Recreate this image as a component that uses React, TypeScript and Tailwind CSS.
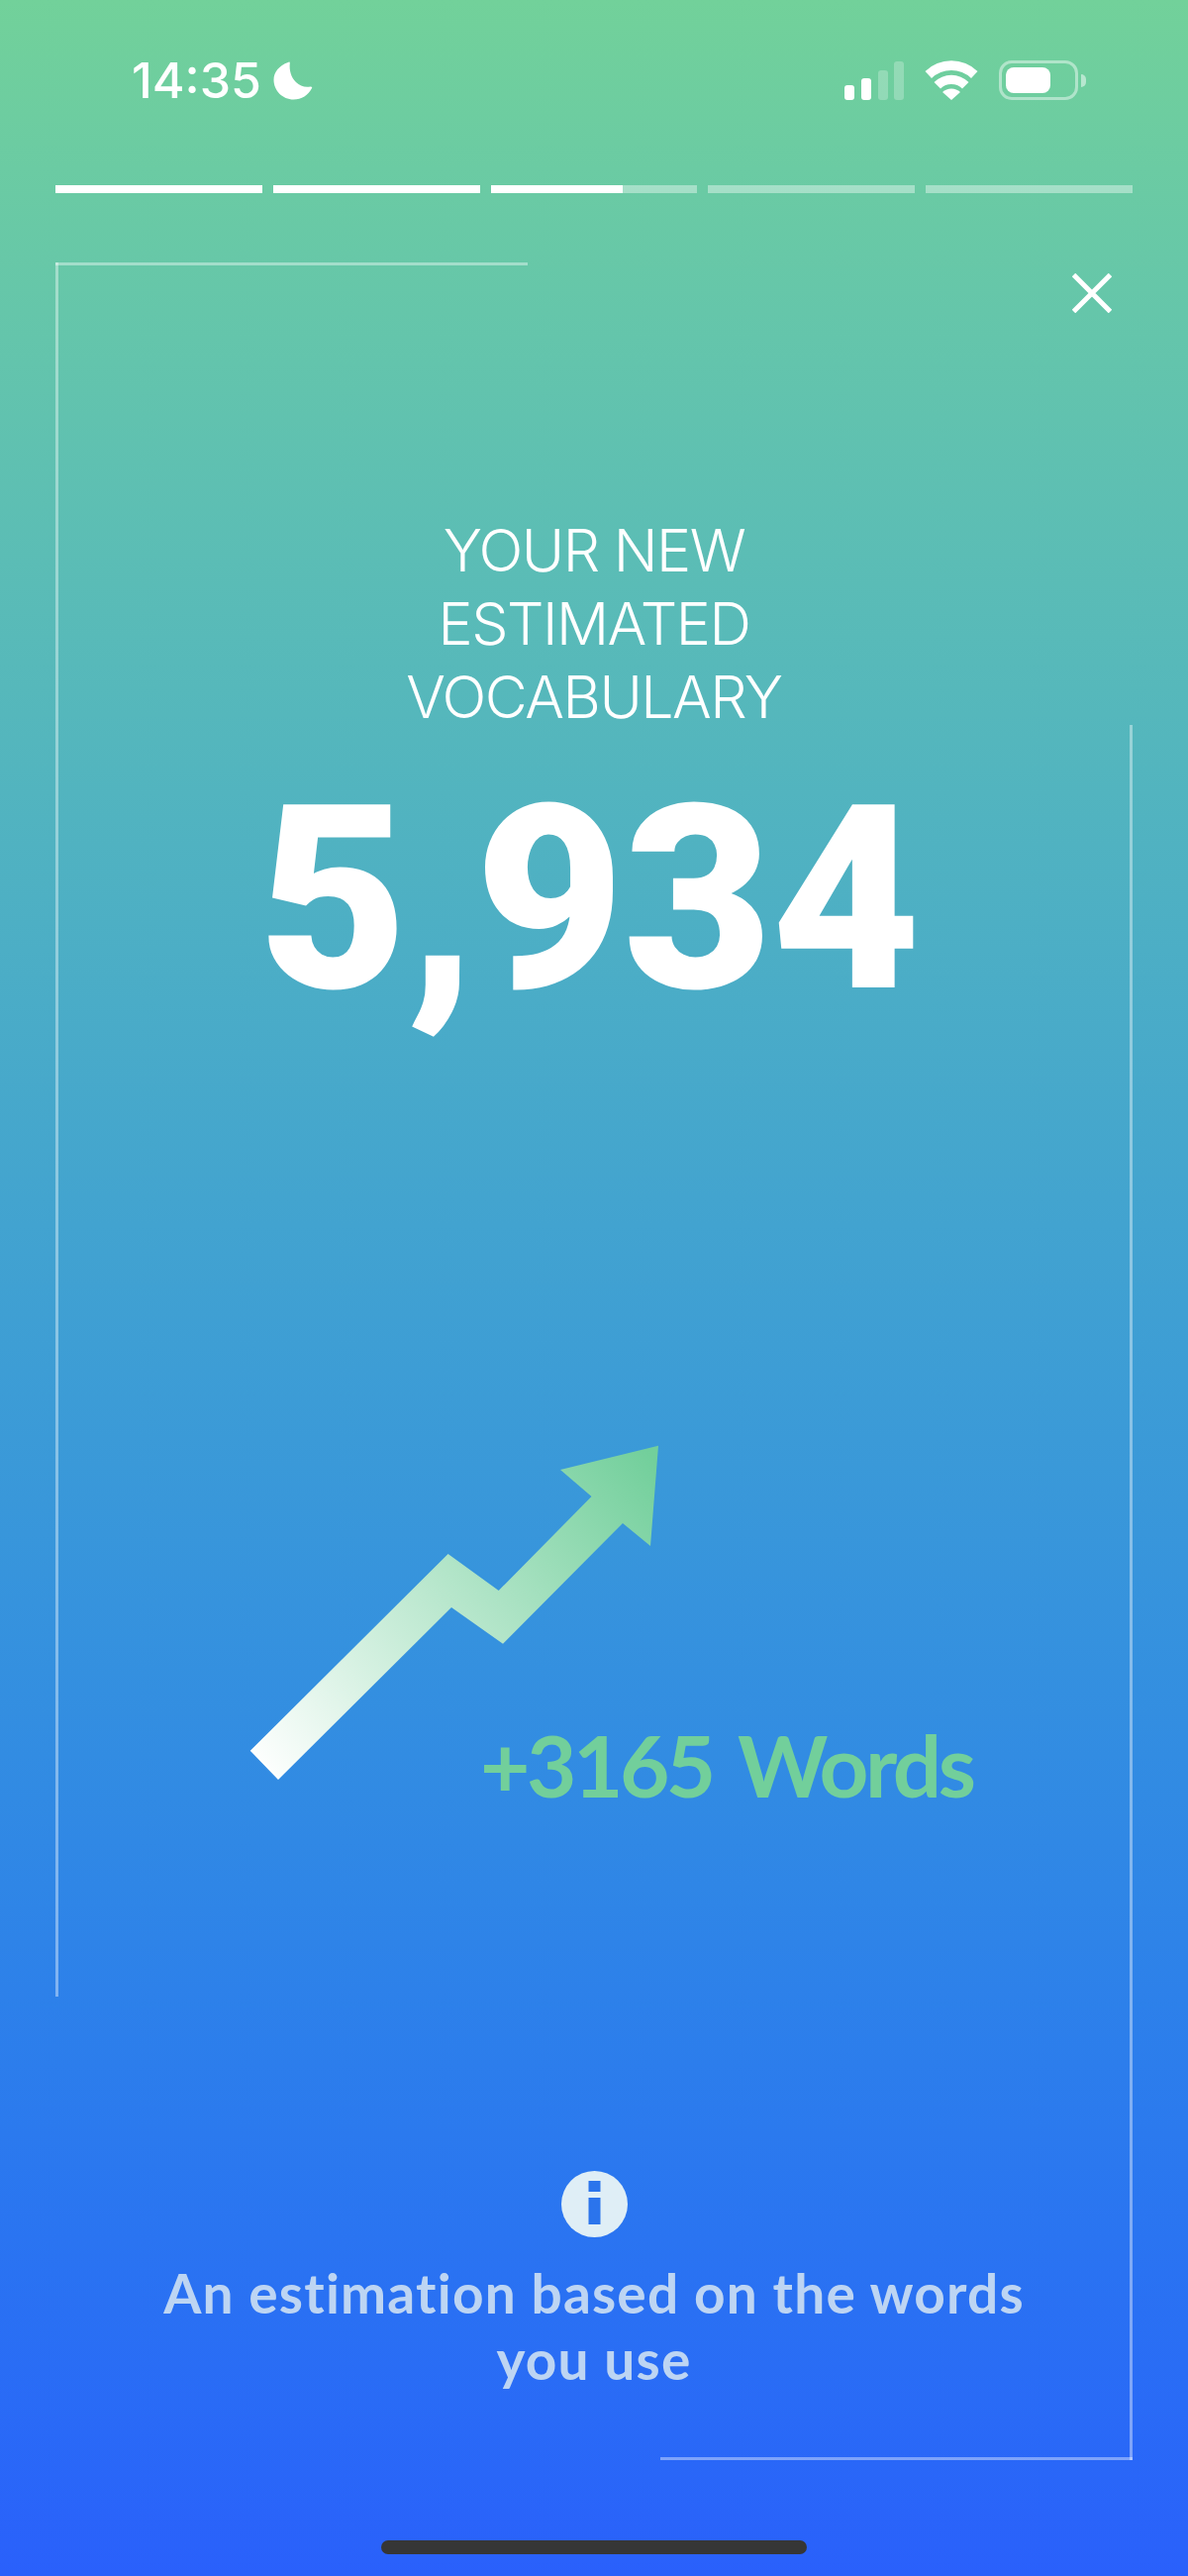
const Moon = () => (
  <svg width="40" height="39" viewBox="0 0 40 39" fill="#ffffff">
    <path d="M15 1 C16 0 17 0.5 16.8 2 C16 9 18 16 23 21 C27 25 32 26.5 37.5 25.5 C39 25.3 39.6 26.2 39 27 C35.5 34 28.5 38.5 20.5 38.5 C9.5 38.5 0.5 29.5 0.5 18.5 C0.5 11 6 4 15 1 Z" />
  </svg>
)

const Signal = () => (
  <svg width="60" height="39" viewBox="0 0 60 39" fill="#ffffff">
    <rect x="0" y="24" width="10" height="15" rx="3" />
    <rect x="17" y="17" width="10" height="22" rx="3" />
    <rect x="34" y="9" width="10" height="30" rx="3" fillOpacity="0.25" />
    <rect x="50" y="0" width="10" height="39" rx="3" fillOpacity="0.25" />
  </svg>
)

const Wifi = () => (
  <svg width="54" height="40" viewBox="0 0 54 40" fill="#ffffff">
    <path d="M0.5 11 A38 38 0 0 1 53.5 11 L47 18 A29 29 0 0 0 7 18 Z" />
    <path d="M9.5 22 A25 25 0 0 1 44.5 22 L38 28.5 A16 16 0 0 0 16 28.5 Z" />
    <path d="M18 32 A13 13 0 0 1 36 32 L27 40 Z" />
  </svg>
)

const Battery = () => (
  <div className="flex items-center">
    <div className="w-[80px] h-[40px] rounded-[13px] border-[3px] border-white/45 p-[4px]">
      <div className="w-[45px] h-full rounded-[8px] bg-white" />
    </div>
    <div className="ml-[3px] w-[5px] h-[13px] rounded-r-full bg-white/50" />
  </div>
)

const Close = () => (
  <svg width="40" height="40" viewBox="0 0 40 40" stroke="#ffffff" strokeWidth="5">
    <path d="M1.5 1.5 L38.5 38.5 M38.5 1.5 L1.5 38.5" />
  </svg>
)

const GrowthArrow = () => (
  <svg width="420" height="345" viewBox="250 456 420 345">
    <defs>
      <linearGradient id="arrowFill" gradientUnits="userSpaceOnUse" x1="262" y1="790" x2="660" y2="470">
        <stop offset="0" stopColor="#ffffff" />
        <stop offset="1" stopColor="#72cf9b" />
      </linearGradient>
    </defs>
    <path
      fill="url(#arrowFill)"
      d="M252.7 766.7 L281 796 L456 622 L508 658.7 L629 537 L657 560 L665 458.7 L566 483 L597.5 510 L503.7 605 L452.6 568 Z"
    />
  </svg>
)

const InfoBadge = () => (
  <svg width="67" height="67" viewBox="0 0 67 67">
    <circle cx="33.5" cy="33.5" r="33.5" fill="#dfeef6" />
    <rect x="27.5" y="10" width="12" height="11" fill="#2b74ec" />
    <rect x="27.5" y="27" width="12" height="27" fill="#2b74ec" />
  </svg>
)

const segments = [100, 100, 64, 0, 0]

export default function App() {
  return (
    <div
      className="relative w-[1200px] h-[2601px] overflow-hidden flex flex-col bg-linear-to-b from-[#72d19a] to-[#2a60fb]"
      style={{ fontFamily: 'Lato, sans-serif' }}
    >
      {/* frame lines */}
      <div className="absolute left-[56px] top-[265px] w-[477px] h-[3px] bg-white/40" />
      <div className="absolute left-[56px] top-[265px] w-[3px] h-[1751px] bg-white/40" />
      <div className="absolute left-[1141px] top-[732px] w-[3px] h-[1752px] bg-white/40" />
      <div className="absolute left-[667px] top-[2481px] w-[477px] h-[3px] bg-white/40" />

      <div className="flex items-center justify-between pl-[133px] pr-[103px] pt-[61px] h-[101px]">
        <div className="flex items-center gap-[12px]">
          <span className="text-[50px] leading-[40px] font-medium text-white" style={{ fontFamily: 'Inter, sans-serif' }}>
            14:35
          </span>
          <Moon />
        </div>
        <div className="flex items-end gap-[21px]">
          <Signal />
          <Wifi />
          <Battery />
        </div>
      </div>

      <div className="flex gap-[11px] px-[56px] mt-[86px]">
        {segments.map((pct, i) => (
          <div key={i} className="flex-1 h-[8px] bg-white/40">
            <div className="h-full bg-white" style={{ width: `${pct}%` }} />
          </div>
        ))}
      </div>

      <div className="flex justify-end pr-[77px] mt-[81px]">
        <Close />
      </div>

      <div className="flex flex-col items-center mt-[203px] text-white">
        <p
          className="text-[59px] leading-[74px] font-light tracking-[-1.5px] text-center"
          style={{ fontFamily: 'Inter, sans-serif' }}
        >
          YOUR NEW
          <br />
          ESTIMATED
          <br />
          VOCABULARY
        </p>
        <p
          className="mt-[37px] text-[260px] leading-[260px] font-black tracking-[-1px] -translate-x-[5px]"
          style={{ fontFamily: 'Roboto, sans-serif' }}
        >
          5,934
        </p>
      </div>

      <div className="pl-[250px] mt-[419px]">
        <GrowthArrow />
      </div>

      <p className="pl-[485px] -mt-[65px] text-[87px] leading-[90px] font-bold tracking-[-3.5px] [word-spacing:8px] text-[#72cf9b]">
        +3165 Words
      </p>

      <div className="flex flex-col items-center mt-[365px]">
        <InfoBadge />
        <p className="mt-[23px] w-[950px] text-center text-[55px] leading-[67px] font-bold tracking-[1.2px] text-[#bdd5f3]">
          An estimation based on the words
          <br />
          you use
        </p>
      </div>

      <div className="mt-auto mb-[22px] mx-auto w-[430px] h-[14px] rounded-full bg-[#363636]" />
    </div>
  )
}
